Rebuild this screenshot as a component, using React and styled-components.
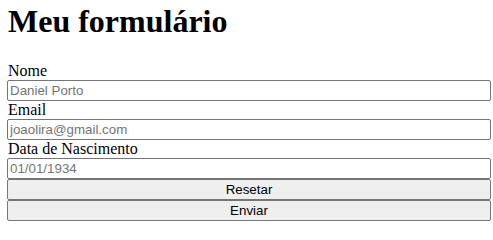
import React from "react";
import styled, { createGlobalStyle } from "styled-components";

const Global = createGlobalStyle`
  html, body { margin: 0; padding: 0; background: #fff; }
  body { font-family: "Liberation Serif", "Times New Roman", serif; color: #000; }
`;

const Page = styled.div`
  padding: 3px 2px 0 7px;
`;

const Title = styled.h1`
  margin: 0 0 22px 1px;
  font-family: "Liberation Serif", "Times New Roman", serif;
  font-size: 32px;
  font-weight: bold;
  line-height: 37px;
`;

const Form = styled.form`
  display: flex;
  flex-direction: column;
  width: 484px;
`;

const Label = styled.label`
  display: block;
  padding-left: 1px;
  font-size: 16px;
  line-height: 18px;
  height: 18px;
`;

const Input = styled.input`
  display: block;
  box-sizing: border-box;
  width: 100%;
  height: 21px;
  margin: 0;
  padding: 1px 2px;
  border: 1px solid #767676;
  border-radius: 2px;
  background: #fff;
  font-family: "Liberation Sans", Arial, sans-serif;
  font-size: 13.333px;
  color: #000;
  outline: none;
  &::placeholder { color: #757575; opacity: 1; }
`;

const Button = styled.button`
  display: block;
  box-sizing: border-box;
  width: 100%;
  height: 21px;
  margin: 0;
  padding: 1px 6px;
  border: 1px solid #767676;
  border-radius: 2px;
  background: #efefef;
  color: #000;
  font-family: "Liberation Sans", Arial, sans-serif;
  font-size: 13.333px;
  line-height: 17px;
`;

const fields = [
  { id: "nome", label: "Nome", placeholder: "Daniel Porto" },
  { id: "email", label: "Email", placeholder: "joaolira@gmail.com" },
  { id: "nasc", label: "Data de Nascimento", placeholder: "01/01/1934" },
];

export default function App() {
  return (
    <>
      <Global />
      <Page>
        <Title>Meu formulário</Title>
        <Form onSubmit={(e) => e.preventDefault()}>
          {fields.map((f) => (
            <React.Fragment key={f.id}>
              <Label htmlFor={f.id}>{f.label}</Label>
              <Input id={f.id} placeholder={f.placeholder} />
            </React.Fragment>
          ))}
          <Button type="reset">Resetar</Button>
          <Button type="submit">Enviar</Button>
        </Form>
      </Page>
    </>
  );
}
